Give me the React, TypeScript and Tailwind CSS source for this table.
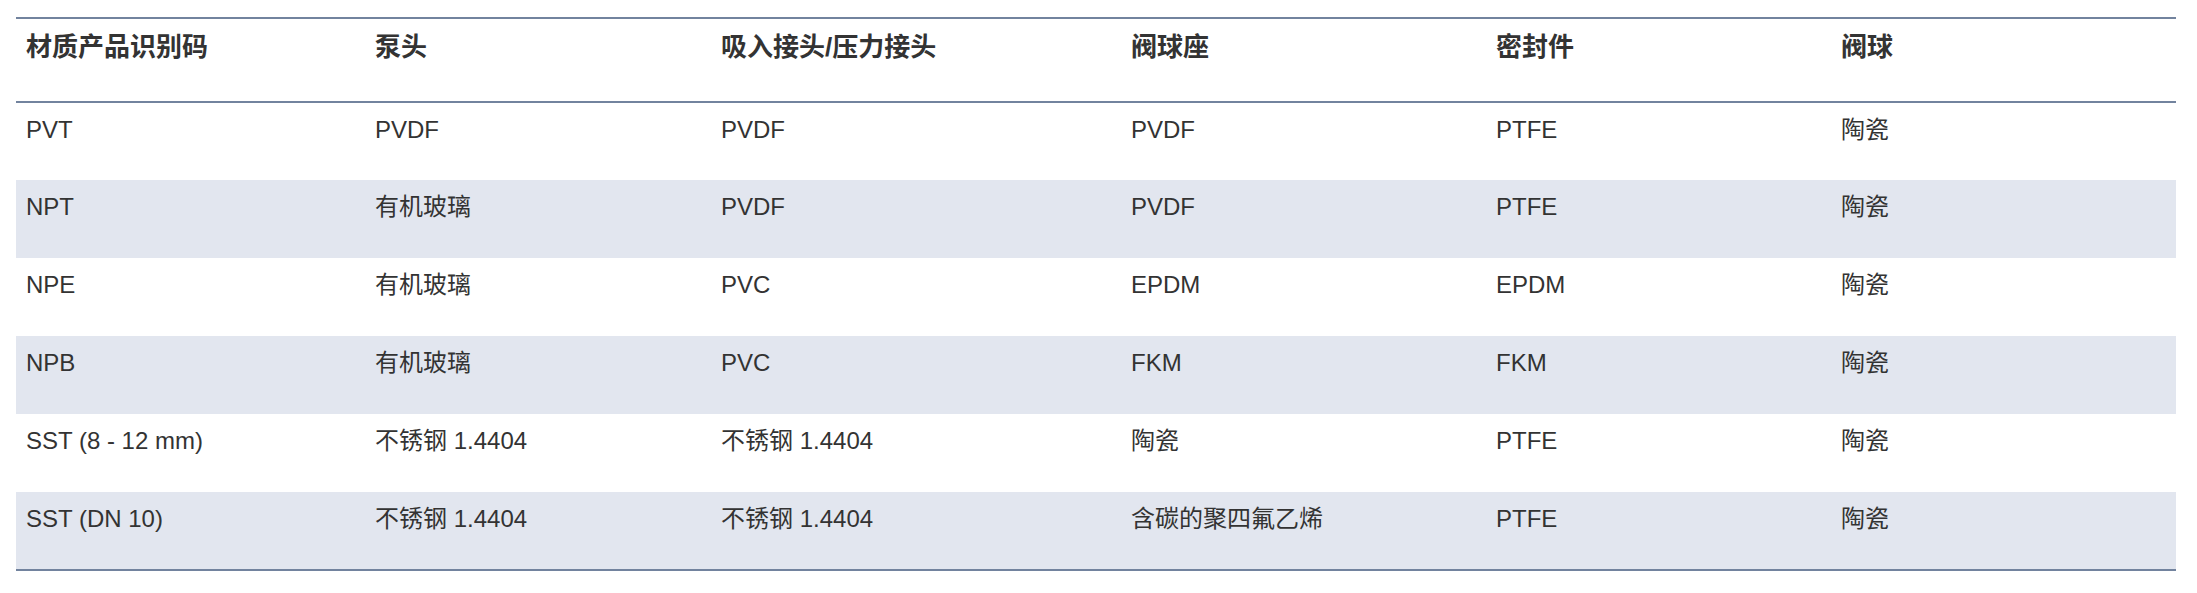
const headers = ['材质产品识别码', '泵头', '吸入接头/压力接头', '阀球座', '密封件', '阀球']

const colWidths = ['w-[349px]', 'w-[346px]', 'w-[410px]', 'w-[365px]', 'w-[345px]', 'w-[345px]']

const rows: string[][] = [
  ['PVT', 'PVDF', 'PVDF', 'PVDF', 'PTFE', '陶瓷'],
  ['NPT', '有机玻璃', 'PVDF', 'PVDF', 'PTFE', '陶瓷'],
  ['NPE', '有机玻璃', 'PVC', 'EPDM', 'EPDM', '陶瓷'],
  ['NPB', '有机玻璃', 'PVC', 'FKM', 'FKM', '陶瓷'],
  ['SST (8 - 12 mm)', '不锈钢 1.4404', '不锈钢 1.4404', '陶瓷', 'PTFE', '陶瓷'],
  ['SST (DN 10)', '不锈钢 1.4404', '不锈钢 1.4404', '含碳的聚四氟乙烯', 'PTFE', '陶瓷'],
]

export default function App() {
  return (
    <div className="min-h-screen bg-white px-4 pt-[17px] font-['Liberation_Sans','Noto_Sans_CJK_SC',sans-serif] text-[#333333]">
      <table className="w-[2160px] table-fixed border-collapse border-y-2 border-[#72839e]">
        <colgroup>
          {colWidths.map((w, i) => (
            <col key={i} className={w} />
          ))}
        </colgroup>
        <thead>
          <tr className="h-[84px] border-b-2 border-[#72839e]">
            {headers.map((h) => (
              <th key={h} className="px-[10px] pt-[9px] align-top text-left text-[26px] font-bold leading-[39px]">
                {h}
              </th>
            ))}
          </tr>
        </thead>
        <tbody>
          {rows.map((row, i) => (
            <tr key={i} className={i % 2 === 1 ? 'h-[78px] bg-[#e2e6ef]' : 'h-[78px] bg-white'}>
              {row.map((cell, j) => (
                <td key={j} className="px-[10px] pt-[9px] align-top text-[24px] leading-[36px]">
                  {cell}
                </td>
              ))}
            </tr>
          ))}
        </tbody>
      </table>
    </div>
  )
}
